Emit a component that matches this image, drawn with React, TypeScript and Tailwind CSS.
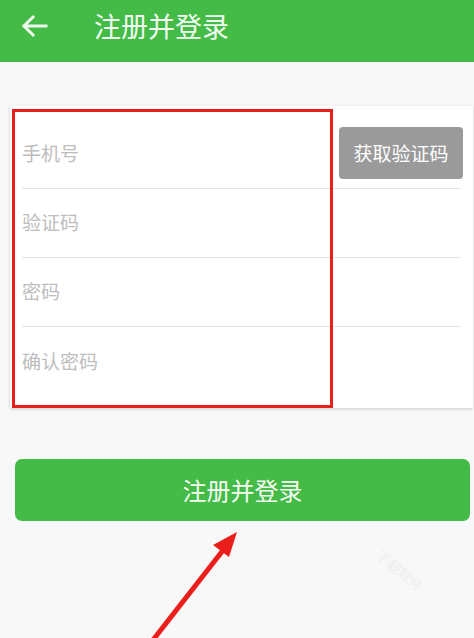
import React from "react";

const font = { fontFamily: '"Noto Sans CJK SC", "Noto Sans", sans-serif' };

export default function App() {
  const fields = ["手机号", "验证码", "密码", "确认密码"];
  return (
    <div className="relative w-[474px] h-[638px] overflow-hidden bg-[#f8f8f8]" style={font}>
      <div className="h-[62px] bg-[#43bb46] flex items-center">
        <svg width="30" height="30" viewBox="0 0 30 30" className="ml-[19px] mt-[-10px]">
          <path d="M27 15H5M14 6l-9 9 9 9" fill="none" stroke="#eef9ee" strokeWidth="3" strokeLinecap="square" />
        </svg>
        <span className="ml-[45px] mt-[-11px] text-[27px] text-[#f2fbf2] leading-none">注册并登录</span>
      </div>

      <div className="relative mt-[44px] ml-[10px] w-[463px] bg-white shadow-[0_1px_3px_rgba(0,0,0,0.18)] pt-[14px] pb-[12px]">
        {fields.map((f, i) => (
          <div
            key={f}
            className={`mx-[12px] h-[69px] flex items-center justify-between ${i < 3 ? "border-b border-[#e4e4e4]" : ""}`}
          >
            <span className="text-[19px] text-[#bdbdbd] mt-[-1px]">{f}</span>
            {i === 0 && (
              <div className="w-[124px] h-[52px] mr-[-2px] mt-[-2px] rounded-[4px] bg-[#9a9a9a] flex items-center justify-center text-[19px] text-white">
                获取验证码
              </div>
            )}
          </div>
        ))}
        <div className="absolute left-[2px] top-[3px] w-[321px] h-[299px] border-[3px] border-[#e6201c]" />
      </div>

      <div className="mt-[51px] ml-[15px] w-[455px] h-[62px] rounded-[7px] bg-[#43bb46] flex items-center justify-center text-[24px] text-[#f4fcf4]">
        注册并登录
      </div>

      <svg className="absolute left-0 top-0" width="474" height="638" viewBox="0 0 474 638">
        <path d="M153 640 L224 549" stroke="#ea1f1b" strokeWidth="5" fill="none" />
        <polygon points="237,532 213,545 229,557" fill="#ea1f1b" />
      </svg>
      <span className="absolute left-[372px] top-[560px] rotate-[40deg] text-[14px] text-[#eeeeee]">下载软件</span>
    </div>
  );
}
